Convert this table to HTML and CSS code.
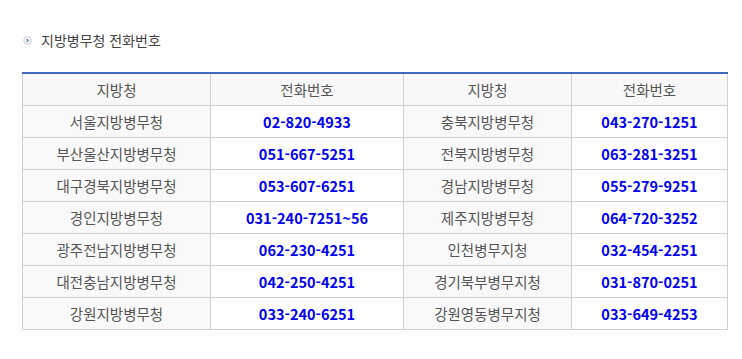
FILE: index.html
```html
<!DOCTYPE html>
<html lang="ko">
<head>
<meta charset="utf-8">
<link rel="stylesheet" href="styles.css">
</head>
<body>
<div class="wrap">
  <h3 class="title"><span class="bullet"><svg width="9" height="9" viewBox="0 0 9 9"><circle cx="4.5" cy="4.5" r="3.8" fill="#fff" stroke="#c8c8c8" stroke-width="1"/><path d="M3.6 2.9 L5.3 4.5 L3.6 6.1" fill="none" stroke="#4a6fd0" stroke-width="1.1"/></svg></span>지방병무청 전화번호</h3>
  <table class="tbl">
    <colgroup>
      <col class="c1"><col class="c2"><col class="c3"><col class="c4">
    </colgroup>
    <thead>
      <tr><th>지방청</th><th>전화번호</th><th>지방청</th><th>전화번호</th></tr>
    </thead>
    <tbody>
      <tr><td class="nm">서울지방병무청</td><td class="ph">02-820-4933</td><td class="nm">충북지방병무청</td><td class="ph">043-270-1251</td></tr>
      <tr><td class="nm">부산울산지방병무청</td><td class="ph">051-667-5251</td><td class="nm">전북지방병무청</td><td class="ph">063-281-3251</td></tr>
      <tr><td class="nm">대구경북지방병무청</td><td class="ph">053-607-6251</td><td class="nm">경남지방병무청</td><td class="ph">055-279-9251</td></tr>
      <tr><td class="nm">경인지방병무청</td><td class="ph">031-240-7251~56</td><td class="nm">제주지방병무청</td><td class="ph">064-720-3252</td></tr>
      <tr><td class="nm">광주전남지방병무청</td><td class="ph">062-230-4251</td><td class="nm">인천병무지청</td><td class="ph">032-454-2251</td></tr>
      <tr><td class="nm">대전충남지방병무청</td><td class="ph">042-250-4251</td><td class="nm">경기북부병무지청</td><td class="ph">031-870-0251</td></tr>
      <tr><td class="nm">강원지방병무청</td><td class="ph">033-240-6251</td><td class="nm">강원영동병무지청</td><td class="ph">033-649-4253</td></tr>
    </tbody>
  </table>
</div>
</body>
</html>
```
FILE: styles.css
```css
html, body {
  margin: 0;
  padding: 0;
  background: #fff;
}
body {
  font-family: "Noto Sans CJK KR", "Noto Sans", sans-serif;
  color: #555;
}
.wrap {
  padding: 29px 15px 0 22px;
}
.title {
  margin: 0 0 21px 0;
  font-size: 14px;
  font-weight: normal;
  color: #444;
  line-height: 22px;
  display: flex;
  align-items: center;
}
.bullet {
  display: inline-flex;
  width: 9px;
  height: 9px;
  margin: 0 9px 0 1px;
}
.tbl {
  width: 705px;
  border-collapse: collapse;
  border-top: 2px solid #3f68b9;
  table-layout: fixed;
}
.c1 { width: 188px; }
.c2 { width: 193px; }
.c3 { width: 168px; }
.c4 { width: 156px; }
.tbl th, .tbl td {
  border: 1px solid #cfcfcf;
  height: 31px;
  padding: 0;
  text-align: center;
  font-size: 14.5px;
  line-height: 20px;
}
.tbl th {
  font-weight: normal;
  background: #f8f8f8;
  color: #555;
}
.tbl td.nm {
  background: #f9f9f9;
  color: #555;
}
.tbl td.ph {
  background: #fff;
  color: #0000f0;
  font-weight: bold;
}
```
